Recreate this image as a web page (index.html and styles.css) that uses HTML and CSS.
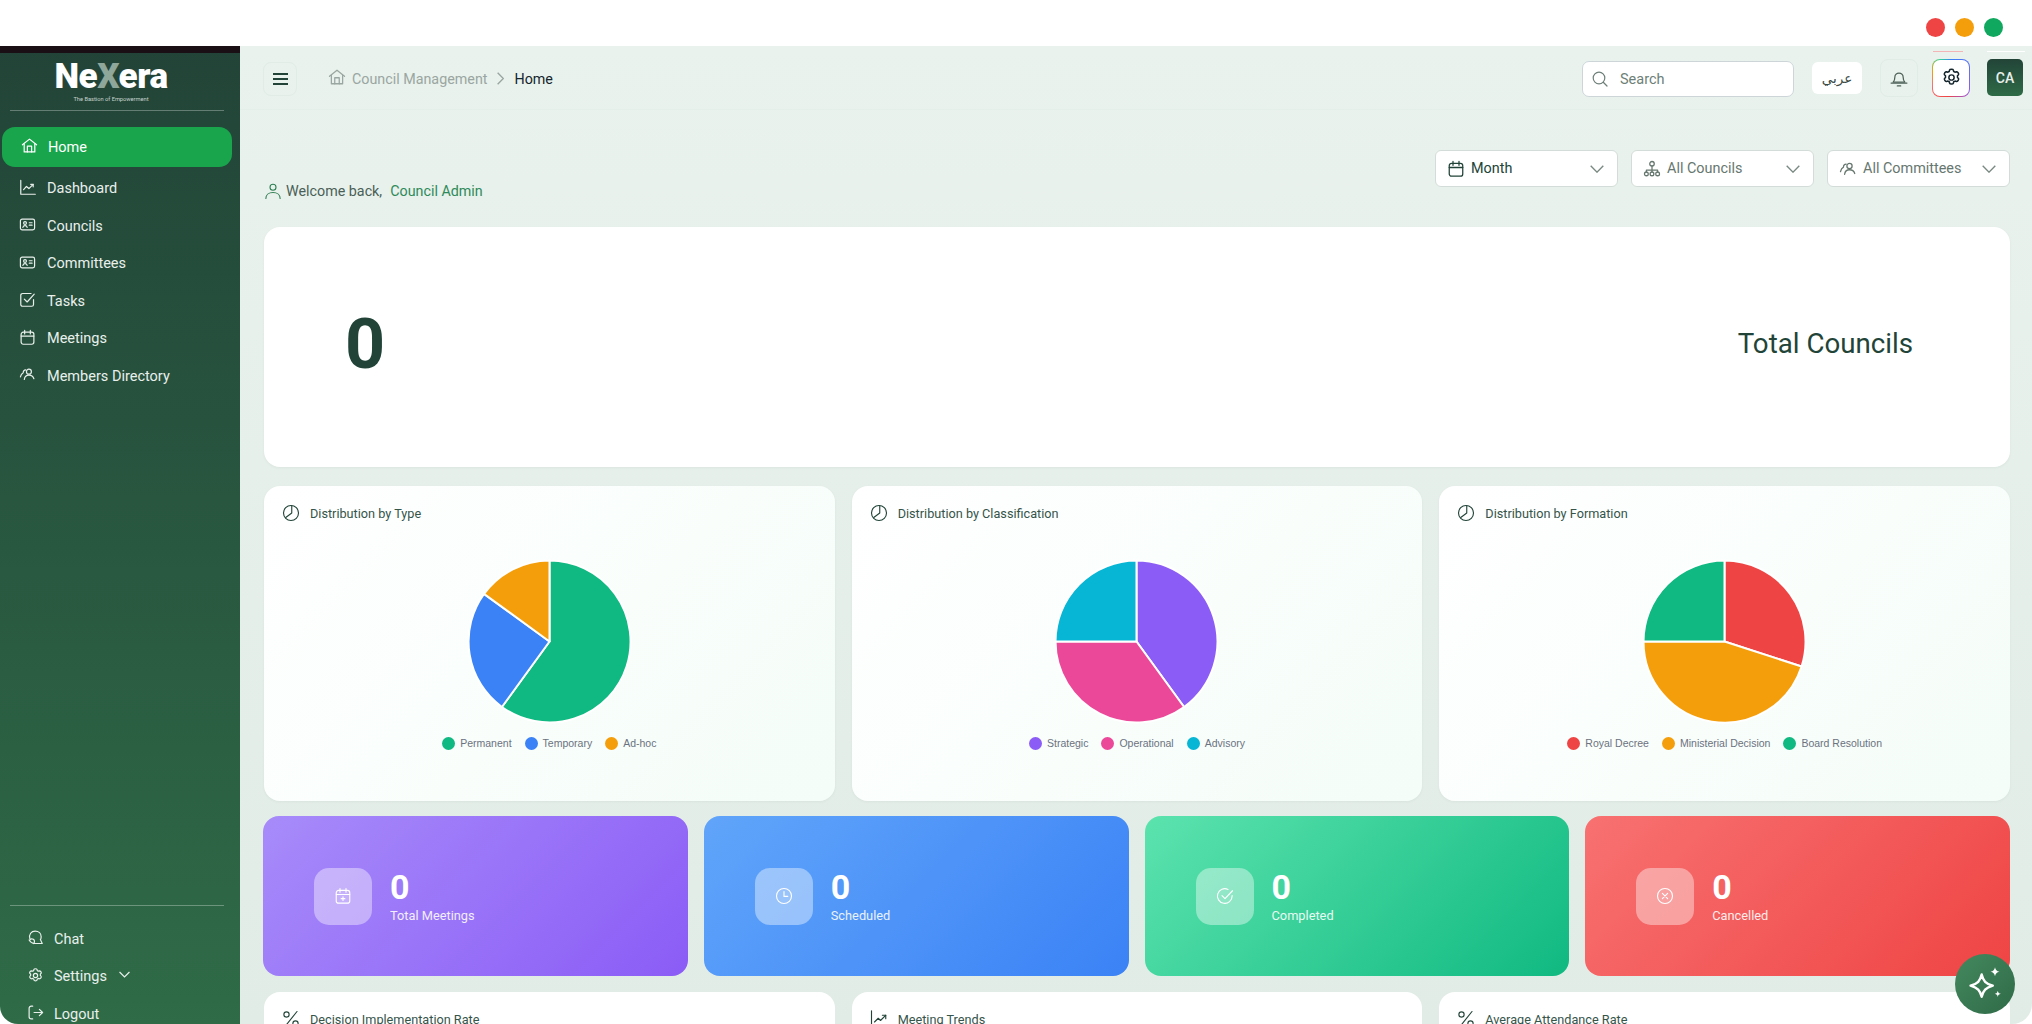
FILE: index.html
```html
<!DOCTYPE html>
<html lang="en">
<head>
    <meta charset="UTF-8">
    <meta name="viewport" content="width=device-width, initial-scale=1.0">
    <title>Council Management</title>
    <link rel="stylesheet" href="styles.css">
</head>
<body>
    <svg class="icon-defs" width="0" height="0" aria-hidden="true">
        <symbol id="i-home" viewBox="0 0 24 24"><path d="M2 11 12 3l10 8"/><path d="M4.500 9.500V21h15V9.500"/><path d="M9 21v-8h6v8"/></symbol>
        <symbol id="i-chart" viewBox="0 0 24 24"><path d="M2.500 2v19.500H23"/><path d="m6.500 15 4-4.500 3.500 3 6-6"/><path d="M16.500 7.500h3.500V11"/></symbol>
        <symbol id="i-card" viewBox="0 0 24 24"><rect x="2" y="4.500" width="20" height="15" rx="2.500"/><circle cx="8.500" cy="10" r="2"/><path d="M5.500 16c.5-2 1.500-2.500 3-2.500s2.500.5 3 2.500"/><path d="M14.500 9.500h4M14.500 13h4"/></symbol>
        <symbol id="i-task" viewBox="0 0 24 24"><path d="M20.500 12v7a2.500 2.500 0 0 1-2.500 2.500H5A2.500 2.500 0 0 1 2.500 19V6A2.500 2.500 0 0 1 5 3.500h12"/><path d="m7.500 11.500 4 4 10-11"/></symbol>
        <symbol id="i-calendar" viewBox="0 0 24 24"><rect x="3" y="4.500" width="18" height="17" rx="3"/><path d="M3 10h18M8 2v5M16 2v5"/></symbol>
        <symbol id="i-calendar-plus" viewBox="0 0 24 24"><rect x="3" y="4.500" width="18" height="17" rx="3"/><path d="M3 10h18M8 2v5M16 2v5M12 13v5M9.500 15.500h5"/></symbol>
        <symbol id="i-users" viewBox="0 0 24 24"><circle cx="14" cy="8" r="3.500"/><path d="M7.500 19c.5-4 3-6 6.500-6s6 2 7 5"/><path d="M9.500 5.500A3.500 3.500 0 0 0 6 9.500c-2 1-3.500 3.500-4 6"/></symbol>
        <symbol id="i-chat" viewBox="0 0 24 24"><path d="M4 13.500C2.500 7.500 6 3 11.500 3 16.500 3 20 6.500 20 11c0 1.500-.3 3-1 4"/><path d="M4 15.500c1-1.500 3-2 5-1 2 1.500 2 4 .5 6"/><path d="M3 15.500c2 3 4 5 7 5h11.500L19 15"/></symbol>
        <symbol id="i-gear" viewBox="0 0 24 24"><path d="M12 2.500c1 0 1.900.1 2.100.9l.4 1.700c.5.2 1 .5 1.500.8l1.700-.5c.8-.2 1.300.5 1.900 1.300.5.800 1 1.500.4 2.100l-1.200 1.300a7 7 0 0 1 0 1.800l1.200 1.300c.6.600.1 1.300-.4 2.100-.6.800-1.100 1.500-1.900 1.300l-1.700-.5c-.5.300-1 .6-1.500.8l-.4 1.700c-.2.800-1.100.9-2.100.9s-1.900-.1-2.100-.9l-.4-1.700a7 7 0 0 1-1.500-.8l-1.700.5c-.8.2-1.300-.5-1.900-1.300-.5-.8-1-1.500-.4-2.100l1.200-1.300a7 7 0 0 1 0-1.800L3.900 8.800c-.6-.6-.1-1.300.4-2.100.6-.8 1.100-1.500 1.900-1.300l1.700.5c.5-.3 1-.6 1.500-.8l.4-1.700c.2-.8 1.100-.9 2.200-.9z"/><circle cx="12" cy="12" r="3"/></symbol>
        <symbol id="i-logout" viewBox="0 0 24 24"><path d="M8 3H6a3 3 0 0 0-3 3v12a3 3 0 0 0 3 3h2"/><path d="M10 12h12M17.500 7.500 22 12l-4.500 4.500"/></symbol>
        <symbol id="i-chevron" viewBox="2 6 20 11"><path d="m3 7 9 9 9-9"/></symbol>
        <symbol id="i-chevron-right" viewBox="6 2 11 20"><path d="m7 3 9 9-9 9"/></symbol>
        <symbol id="i-user" viewBox="0 0 24 24"><circle cx="12" cy="7" r="4"/><path d="M2.500 22c0-5 4-8 9.500-8s9.500 3 9.500 8"/></symbol>
        <symbol id="i-org" viewBox="0 0 24 24"><circle cx="12" cy="5" r="3"/><circle cx="4.500" cy="18.500" r="2.500"/><circle cx="12" cy="18.500" r="2.500"/><circle cx="19.500" cy="18.500" r="2.500"/><path d="M12 8v8M4.500 16v-2.500h15V16"/></symbol>
        <symbol id="i-pie" viewBox="0 0 24 24"><circle cx="12" cy="12" r="10"/><path d="M13 2.500V12l-8 6"/></symbol>
        <symbol id="i-percent" viewBox="0 0 24 24"><path d="M20 2 4 22"/><circle cx="6" cy="6" r="3.500"/><circle cx="18" cy="18" r="3.500"/></symbol>
        <symbol id="i-trend" viewBox="0 0 24 24"><path d="M2 1v22"/><path d="m6 16 5-5 3 3 7-7"/><path d="M16.500 7H21v4.500"/></symbol>
        <symbol id="i-clock" viewBox="0 0 24 24"><circle cx="12" cy="12" r="10"/><path d="M12 6v6.500h5"/></symbol>
        <symbol id="i-check" viewBox="0 0 24 24"><path d="M21.500 11.500V12A9.800 9.800 0 1 1 16 3.200"/><path d="m8 11.500 4 4L22 5"/></symbol>
        <symbol id="i-cancel" viewBox="0 0 24 24"><circle cx="12" cy="12" r="10"/><path d="m8.500 8.500 7 7M15.500 8.500l-7 7"/></symbol>
    </svg>

    <div class="titlebar">
        <span class="dot dot-red"></span>
        <span class="dot dot-orange"></span>
        <span class="dot dot-green"></span>
    </div>

    <div class="app">
        <aside class="sidebar">
            <div class="sidebar-strip"></div>
            <div class="logo">
                <div class="logo-name">Ne<span class="logo-x">X</span>era</div>
                <div class="logo-tag">The Bastion of Empowerment</div>
            </div>
            <nav class="nav">
                <a class="nav-item active"><svg class="icon"><use href="#i-home"/></svg>Home</a>
                <a class="nav-item"><svg class="icon"><use href="#i-chart"/></svg>Dashboard</a>
                <a class="nav-item"><svg class="icon"><use href="#i-card"/></svg>Councils</a>
                <a class="nav-item"><svg class="icon"><use href="#i-card"/></svg>Committees</a>
                <a class="nav-item"><svg class="icon"><use href="#i-task"/></svg>Tasks</a>
                <a class="nav-item"><svg class="icon"><use href="#i-calendar"/></svg>Meetings</a>
                <a class="nav-item"><svg class="icon"><use href="#i-users"/></svg>Members Directory</a>
            </nav>
            <div class="sidebar-foot">
                <a class="nav-item"><svg class="icon"><use href="#i-chat"/></svg>Chat</a>
                <a class="nav-item"><svg class="icon"><use href="#i-gear"/></svg>Settings<svg class="nav-chevron"><use href="#i-chevron"/></svg></a>
                <a class="nav-item"><svg class="icon"><use href="#i-logout"/></svg>Logout</a>
            </div>
        </aside>

        <main class="main">
            <header class="topbar">
                <button class="menu-btn" aria-label="Menu">
                    <span></span><span></span><span></span>
                </button>
                <div class="breadcrumb">
                    <svg class="icon"><use href="#i-home"/></svg>
                    <span>Council Management</span>
                    <svg class="crumb-sep"><use href="#i-chevron-right"/></svg>
                    <span class="crumb-current">Home</span>
                </div>
                <div class="top-actions">
                    <div class="search">
                        <svg class="icon" viewBox="0 0 16 16"><circle cx="7" cy="7" r="5.800"/><path d="m11.500 11.500 3.500 3.500"/></svg>
                        <span>Search</span>
                    </div>
                    <button class="lang-btn">عربي</button>
                    <button class="icon-btn bell-btn" aria-label="Notifications">
                        <svg class="icon" viewBox="0 0 24 24"><path d="M5 17c1.500-1.500 2-3 2-6a5 5 0 0 1 10 0c0 3 .5 4.500 2 6z"/><path d="M2.500 18h19M10 21.500h4"/></svg>
                    </button>
                    <button class="icon-btn gear-btn" aria-label="Settings">
                        <svg class="icon"><use href="#i-gear"/></svg>
                    </button>
                    <div class="avatar">CA</div>
                </div>
            </header>

            <div class="content">
                <div class="welcome-row">
                    <div class="welcome">
                        <svg class="icon"><use href="#i-user"/></svg>
                        <span>Welcome back,</span>
                        <span class="welcome-name">Council Admin</span>
                    </div>
                    <div class="filters">
                        <div class="filter filter-dark"><svg class="icon"><use href="#i-calendar"/></svg><span>Month</span><svg class="filter-chevron"><use href="#i-chevron"/></svg></div>
                        <div class="filter"><svg class="icon"><use href="#i-org"/></svg><span>All Councils</span><svg class="filter-chevron"><use href="#i-chevron"/></svg></div>
                        <div class="filter"><svg class="icon"><use href="#i-users"/></svg><span>All Committees</span><svg class="filter-chevron"><use href="#i-chevron"/></svg></div>
                    </div>
                </div>

                <section class="total-card">
                    <div class="total-value">0</div>
                    <div class="total-label">Total Councils</div>
                </section>

                <section class="chart-grid">
                    <div class="chart-card">
                        <div class="card-head"><svg class="icon"><use href="#i-pie"/></svg>Distribution by Type</div>
                        <div class="chart-body">
                            <svg class="pie" viewBox="0 0 164 164">
                                <path fill="#10b981" d="M82 82 82 1.500A80.500 80.500 0 1 1 34.700 147.100Z"/>
                                <path fill="#3b82f6" d="M82 82 34.700 147.100A80.500 80.500 0 0 1 16.900 34.700Z"/>
                                <path fill="#f59e0b" d="M82 82 16.900 34.700A80.500 80.500 0 0 1 82 1.500Z"/>
                            </svg>
                            <ul class="legend">
                                <li><i class="swatch bg-emerald"></i>Permanent</li>
                                <li><i class="swatch bg-blue"></i>Temporary</li>
                                <li><i class="swatch bg-amber"></i>Ad-hoc</li>
                            </ul>
                        </div>
                    </div>
                    <div class="chart-card">
                        <div class="card-head"><svg class="icon"><use href="#i-pie"/></svg>Distribution by Classification</div>
                        <div class="chart-body">
                            <svg class="pie" viewBox="0 0 164 164">
                                <path fill="#8b5cf6" d="M82 82 82 1.500A80.500 80.500 0 0 1 129.300 147.100Z"/>
                                <path fill="#ec4899" d="M82 82 129.300 147.100A80.500 80.500 0 0 1 1.500 82Z"/>
                                <path fill="#06b6d4" d="M82 82 1.500 82A80.500 80.500 0 0 1 82 1.500Z"/>
                            </svg>
                            <ul class="legend">
                                <li><i class="swatch bg-violet"></i>Strategic</li>
                                <li><i class="swatch bg-pink"></i>Operational</li>
                                <li><i class="swatch bg-cyan"></i>Advisory</li>
                            </ul>
                        </div>
                    </div>
                    <div class="chart-card">
                        <div class="card-head"><svg class="icon"><use href="#i-pie"/></svg>Distribution by Formation</div>
                        <div class="chart-body">
                            <svg class="pie" viewBox="0 0 164 164">
                                <path fill="#ef4444" d="M82 82 82 1.500A80.500 80.500 0 0 1 158.600 106.900Z"/>
                                <path fill="#f59e0b" d="M82 82 158.600 106.900A80.500 80.500 0 0 1 1.500 82Z"/>
                                <path fill="#10b981" d="M82 82 1.500 82A80.500 80.500 0 0 1 82 1.500Z"/>
                            </svg>
                            <ul class="legend">
                                <li><i class="swatch bg-red"></i>Royal Decree</li>
                                <li><i class="swatch bg-amber"></i>Ministerial Decision</li>
                                <li><i class="swatch bg-emerald"></i>Board Resolution</li>
                            </ul>
                        </div>
                    </div>
                </section>

                <section class="stat-grid">
                    <div class="stat-card stat-purple">
                        <div class="stat-icon"><svg class="icon"><use href="#i-calendar-plus"/></svg></div>
                        <div><div class="stat-value">0</div><div class="stat-label">Total Meetings</div></div>
                    </div>
                    <div class="stat-card stat-blue">
                        <div class="stat-icon"><svg class="icon"><use href="#i-clock"/></svg></div>
                        <div><div class="stat-value">0</div><div class="stat-label">Scheduled</div></div>
                    </div>
                    <div class="stat-card stat-green">
                        <div class="stat-icon"><svg class="icon"><use href="#i-check"/></svg></div>
                        <div><div class="stat-value">0</div><div class="stat-label">Completed</div></div>
                    </div>
                    <div class="stat-card stat-red">
                        <div class="stat-icon"><svg class="icon"><use href="#i-cancel"/></svg></div>
                        <div><div class="stat-value">0</div><div class="stat-label">Cancelled</div></div>
                    </div>
                </section>

                <section class="chart-grid">
                    <div class="plain-card"><div class="card-head"><svg class="icon"><use href="#i-percent"/></svg>Decision Implementation Rate</div></div>
                    <div class="plain-card"><div class="card-head"><svg class="icon"><use href="#i-trend"/></svg>Meeting Trends</div></div>
                    <div class="plain-card"><div class="card-head"><svg class="icon"><use href="#i-percent"/></svg>Average Attendance Rate</div></div>
                </section>
            </div>

            <button class="fab" aria-label="Assistant">
                <svg viewBox="0 0 36 36"><path d="M15 9.500c1.500 6 3.500 8 10 10-6.500 2-8.500 4-10 10-1.500-6-3.500-8-10-10 6.500-2 8.500-4 10-10z"/><path class="fab-spark" d="M27 3c.5 2.500 1.500 3.500 4 4-2.500.5-3.500 1.500-4 4-.5-2.500-1.500-3.500-4-4 2.500-.5 3.500-1.500 4-4zM29.500 24c.4 1.800 1 2.400 2.800 2.800-1.800.4-2.400 1-2.800 2.800-.4-1.800-1-2.400-2.800-2.800 1.800-.4 2.400-1 2.800-2.800z"/></svg>
            </button>
        </main>
    </div>
</body>
</html>
```

FILE: styles.css
```css
* {
    box-sizing: border-box;
}

html, body {
    height: 100%;
}

body {
    margin: 0;
    overflow: hidden;
    background-color: #fff;
    font-family: Roboto, "Open Sans", sans-serif;
    color: #224438;
}

.icon-defs {
    position: absolute;
}

.icon {
    width: 18px;
    height: 18px;
    flex: none;
    fill: none;
    stroke: currentColor;
    stroke-width: 1.7;
    stroke-linecap: round;
    stroke-linejoin: round;
}

/* window chrome */
.titlebar {
    height: 46px;
    display: flex;
    justify-content: flex-end;
    align-items: center;
    gap: 10px;
    padding: 8px 29px 0 0;
}

.dot {
    width: 19px;
    height: 19px;
    border-radius: 50%;
}

.dot-red { background-color: #ef4444; }
.dot-orange { background-color: #f59e0b; }
.dot-green { background-color: #10a85f; }

.app {
    height: 978px;
    display: flex;
}

/* sidebar */
.sidebar {
    width: 240px;
    flex: none;
    display: flex;
    flex-direction: column;
    overflow: hidden;
    border-bottom-left-radius: 18px;
    background: linear-gradient(180deg, #224438 0%, #2f6b47 100%);
    color: #e9f0ec;
}

.sidebar-strip {
    height: 7px;
    background-color: #1a0f14;
}

.logo {
    height: 58px;
    margin: 0 16px 0 10px;
    padding: 6px 12px 0 0;
    border-bottom: 1px solid rgba(255, 255, 255, 0.3);
    text-align: center;
    color: #fff;
}

.logo-name {
    font-size: 35px;
    font-weight: 900;
    line-height: 36px;
    letter-spacing: -0.5px;
}

.logo-x {
    color: #8fa69b;
}

.logo-tag {
    font-size: 5.7px;
    line-height: 8px;
    color: #c8d4ce;
}

.nav {
    flex: 1;
    padding-top: 16px;
}

.nav-item {
    height: 37.5px;
    display: flex;
    align-items: center;
    gap: 11.5px;
    padding-left: 18.5px;
    font-size: 14.5px;
    color: #e9f0ec;
}

.nav-item .icon {
    width: 17px;
    height: 17px;
    margin-top: -3px;
}

.nav-item.active {
    height: 40px;
    margin: 0 8px 3px 2px;
    gap: 10.5px;
    border-radius: 13px;
    background-color: #18a54c;
    color: #fff;
}

.sidebar-foot {
    height: 119px;
    flex: none;
    margin: 0 16px 0 10px;
    padding-top: 14.5px;
    border-top: 1px solid rgba(255, 255, 255, 0.3);
}

.sidebar-foot .nav-item {
    padding-left: 16.5px;
    gap: 10.5px;
}

.sidebar-foot .nav-chevron {
    width: 11px;
    height: 7px;
    margin: -5px 0 0 2px;
    fill: none;
    stroke: currentColor;
    stroke-width: 2.2;
}

/* main column */
.main {
    flex: 1;
    min-width: 0;
    position: relative;
    overflow: hidden;
    border-bottom-right-radius: 20px;
    background: linear-gradient(180deg, #e9f2ec 0%, #e2ece6 100%);
}

.topbar {
    height: 64px;
    display: flex;
    align-items: center;
    padding: 2px 9px 0 23px;
    border-bottom: 1px solid #e3efe8;
}

.menu-btn {
    width: 34px;
    height: 34px;
    display: flex;
    flex-direction: column;
    justify-content: center;
    align-items: center;
    gap: 3px;
    padding: 0;
    border: 1px solid #e2ece6;
    border-radius: 8px;
    background: none;
}

.menu-btn span {
    width: 15px;
    height: 2px;
    background-color: #224438;
}

.breadcrumb {
    display: flex;
    align-items: center;
    margin: 0 0 0 31px;
    font-size: 14.3px;
    color: #9aa6a2;
}

.breadcrumb .icon {
    margin-right: 6px;
    margin-top: -3px;
}

.crumb-sep {
    width: 7px;
    height: 13px;
    margin: 0 10px;
    fill: none;
    stroke: #9aa6a2;
    stroke-width: 2.2;
}

.crumb-current {
    color: #15252c;
}

.top-actions {
    display: flex;
    align-items: center;
    margin: -2px 0 0 auto;
}

.search {
    width: 212px;
    height: 36px;
    display: flex;
    align-items: center;
    gap: 12px;
    padding: 1px 9px 0;
    margin: 2px 18px 0 0;
    border: 1px solid #cdd5d9;
    border-radius: 7px;
    background-color: #fff;
    font-size: 14.5px;
    color: #6d7f78;
}

.search .icon {
    width: 16px;
    height: 16px;
    stroke-width: 1.2;
}

.lang-btn {
    width: 50px;
    height: 32px;
    margin-right: 18px;
    padding: 1px 0 0;
    border: none;
    border-radius: 6px;
    background-color: #fff;
    font-family: "DejaVu Sans", sans-serif;
    font-size: 13.5px;
    color: #3a4a44;
}

.icon-btn {
    width: 38px;
    height: 38px;
    display: flex;
    align-items: center;
    justify-content: center;
    padding: 0;
    border-radius: 8px;
    color: #224438;
}

.bell-btn {
    border: 1px solid #e2ece6;
    background: none;
    margin-right: 14px;
    color: #4e625a;
}

.bell-btn .icon {
    width: 20px;
    height: 20px;
    stroke-width: 1.500;
}

.gear-btn {
    position: relative;
    border: 1.5px solid transparent;
    background:
        linear-gradient(#fff, #fff) padding-box,
        conic-gradient(#3b82f6 0deg, #8b5cf6 120deg, #ef4444 190deg, #f87171 250deg, #f59e0b 290deg, #34d399 330deg, #3b82f6 360deg) border-box;
    color: #15252c;
    margin-right: 17px;
}

/* thin leftovers of the window edge above the two buttons */
.gear-btn::before,
.avatar::before {
    content: "";
    position: absolute;
    top: -9px;
    left: 0;
    height: 1px;
}

.gear-btn::before {
    width: 30px;
    background-color: #f3b5b5;
}

.gear-btn .icon {
    width: 21px;
    height: 21px;
    stroke-width: 1.7;
}

.avatar {
    position: relative;
    width: 36px;
    height: 37px;
    display: flex;
    align-items: center;
    justify-content: center;
    border-radius: 5px;
    background: linear-gradient(180deg, #224438, #2f6b47);
    color: #e9f0ec;
    font-size: 14px;
    font-weight: 500;
}

.avatar::before {
    top: -8px;
    width: 38px;
    background-color: #fff;
}

/* page content */
.content {
    padding: 39px 22px 0 24px;
}

.welcome-row {
    height: 52px;
    display: flex;
    justify-content: space-between;
    margin-bottom: 26px;
}

.welcome {
    align-self: flex-end;
    display: flex;
    align-items: center;
    height: 20px;
    font-size: 14.3px;
    color: #4a5f57;
}

.welcome .icon {
    color: #2f7f54;
    margin-right: 4px;
    stroke-width: 1.500;
}

.welcome-name {
    margin-left: 8px;
    color: #2f8a5a;
}

.filters {
    align-self: flex-start;
    display: flex;
    gap: 13px;
    margin-top: 1px;
}

.filter {
    width: 183px;
    height: 37px;
    display: flex;
    align-items: center;
    gap: 6px;
    padding: 0 13px 0 11px;
    border: 1px solid #d3dcd8;
    border-radius: 6px;
    background-color: #fff;
    font-size: 14.4px;
    color: #66776f;
}

.filter-dark {
    color: #224438;
}

.filter-chevron {
    width: 14px;
    height: 8px;
    margin-left: auto;
    fill: none;
    stroke: #7a8a83;
    stroke-width: 2;
}

.total-card {
    height: 240px;
    display: flex;
    justify-content: space-between;
    align-items: center;
    padding: 0 97px 7px 81px;
    border-radius: 16px;
    background-color: #fff;
    box-shadow: 0 1px 3px rgba(34, 68, 56, 0.05);
}

.total-value {
    font-size: 70px;
    font-weight: 700;
    color: #224438;
}

.total-label {
    font-size: 27.7px;
    color: #224438;
}

.chart-grid {
    display: grid;
    grid-template-columns: repeat(3, 1fr);
    gap: 17px;
    margin-top: 19px;
}

.chart-card {
    height: 315px;
    border-radius: 16px;
    background: linear-gradient(135deg, #ffffff 0%, #f4fdf8 100%);
    box-shadow: 0 1px 3px rgba(34, 68, 56, 0.05);
}

.card-head {
    height: 54px;
    display: flex;
    align-items: center;
    gap: 10px;
    padding-left: 18px;
    font-size: 12.7px;
    color: #35544a;
}

.card-head .icon {
    color: #224438;
    stroke-width: 1.500;
}

.chart-body {
    display: flex;
    flex-direction: column;
    align-items: center;
    padding-top: 19px;
}

.pie {
    width: 165px;
    height: 165px;
    stroke: #fff;
    stroke-width: 2;
    stroke-linejoin: round;
}

.legend {
    display: flex;
    gap: 13px;
    list-style: none;
    margin: 13px 0 0;
    padding: 0;
    font-family: "Liberation Sans", Arial, sans-serif;
    font-size: 10.5px;
    line-height: 13px;
    color: #6b7280;
}

.legend li {
    display: flex;
    align-items: center;
    gap: 5px;
}

.swatch {
    width: 13px;
    height: 13px;
    border-radius: 50%;
}

.bg-emerald { background-color: #10b981; }
.bg-blue { background-color: #3b82f6; }
.bg-amber { background-color: #f59e0b; }
.bg-violet { background-color: #8b5cf6; }
.bg-pink { background-color: #ec4899; }
.bg-cyan { background-color: #06b6d4; }
.bg-red { background-color: #ef4444; }

.stat-grid {
    display: grid;
    grid-template-columns: repeat(4, 1fr);
    gap: 16px;
    margin-top: 15px;
    margin-left: -1px;
}

.stat-card {
    height: 160px;
    display: flex;
    align-items: center;
    gap: 18px;
    padding-left: 51px;
    border-radius: 16px;
    color: #fff;
}

.stat-purple { background: linear-gradient(135deg, #a78bfa 0%, #8b5cf6 100%); }
.stat-blue { background: linear-gradient(135deg, #60a5fa 0%, #3b82f6 100%); }
.stat-green { background: linear-gradient(135deg, #5ce3ae 0%, #10b981 100%); }
.stat-red { background: linear-gradient(135deg, #f87171 0%, #ef4444 100%); }

.stat-icon {
    width: 58px;
    height: 57px;
    display: flex;
    align-items: center;
    justify-content: center;
    border-radius: 15px;
    background-color: rgba(255, 255, 255, 0.4);
}

.stat-icon .icon {
    stroke-width: 1.500;
}

.stat-value {
    font-size: 34px;
    font-weight: 700;
    line-height: 38px;
    margin-top: -1px;
}

.stat-label {
    font-size: 12.8px;
    line-height: 16px;
    margin-top: 2px;
    opacity: 0.88;
}

.chart-grid + .stat-grid + .chart-grid {
    margin-top: 16px;
}

.plain-card {
    height: 200px;
    border-radius: 16px;
    background-color: #fff;
}

.fab {
    position: absolute;
    right: 17px;
    bottom: 10px;
    width: 60px;
    height: 60px;
    display: flex;
    align-items: center;
    justify-content: center;
    padding: 0;
    border: none;
    border-radius: 50%;
    background: linear-gradient(135deg, #44885f, #2f6b47);
}

.fab svg {
    width: 40px;
    height: 40px;
    fill: none;
    stroke: #fff;
    stroke-width: 2.2;
    stroke-linejoin: round;
}

.fab .fab-spark {
    fill: #fff;
    stroke: none;
}
```
